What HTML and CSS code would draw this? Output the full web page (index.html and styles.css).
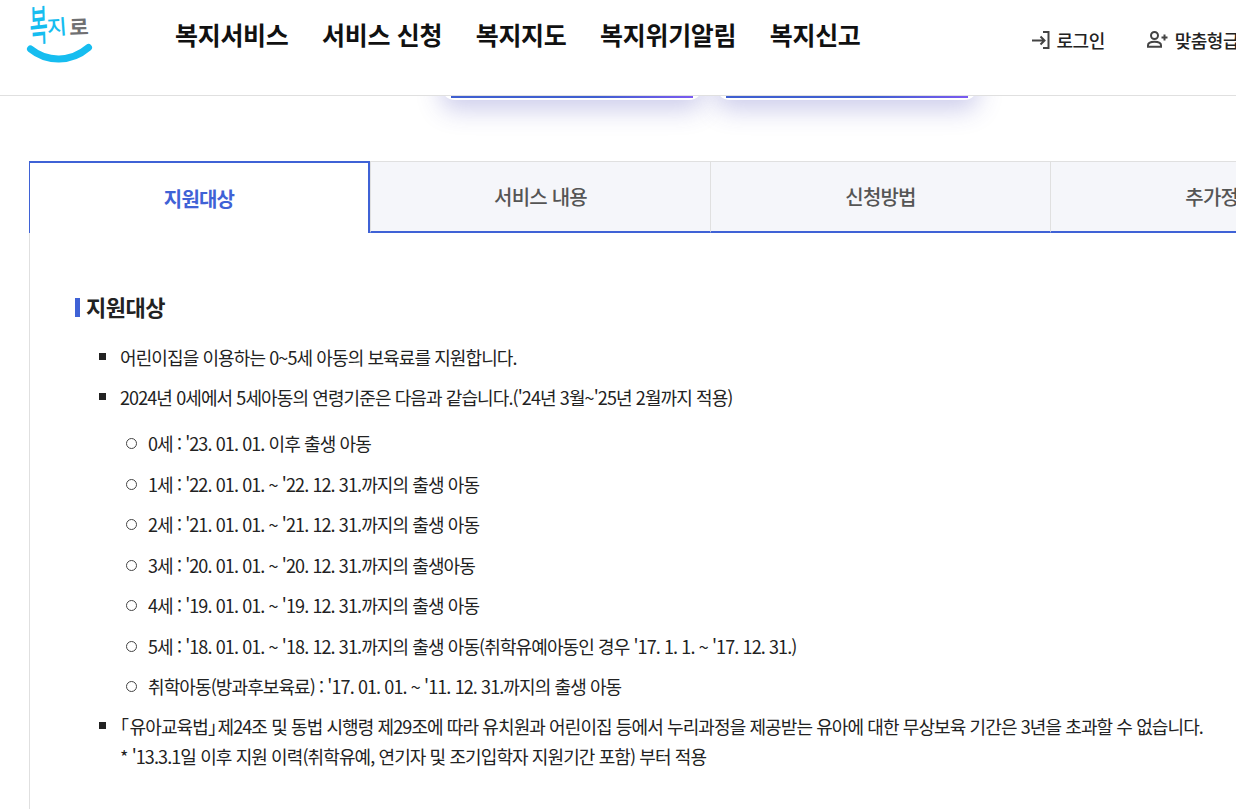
FILE: index.html
```html
<!DOCTYPE html>
<html lang="ko">
<head>
<meta charset="utf-8">
<title>복지로</title>
<link rel="stylesheet" href="styles.css">
</head>
<body>
<header class="site-header">
  <a class="logo" href="#">
    <svg class="logo-svg" width="70" height="66" viewBox="0 0 70 66">
      <text class="logo-t logo-blue" transform="translate(5 42) scale(.82 1.780) rotate(-3)">복</text>
      <text class="logo-t logo-blue" transform="translate(22.500 35) scale(.9 .85) rotate(-4)">지</text>
      <text class="logo-t logo-gray" transform="translate(44.500 35) scale(.88 .85) rotate(-2)">로</text>
      <path d="M5.500 49C22 62.500 46 62.500 63.500 47.500" fill="none" stroke="#16bdf0" stroke-width="7" stroke-linecap="round"/>
    </svg>
  </a>
  <nav class="gnb">
    <a href="#">복지서비스</a>
    <a href="#">서비스 신청</a>
    <a href="#">복지지도</a>
    <a href="#">복지위기알림</a>
    <a href="#">복지신고</a>
  </nav>
  <div class="util">
    <a href="#" class="util-link">
      <svg width="18" height="18" viewBox="0 0 18 18" fill="none" stroke="#444" stroke-width="2"><path d="M0 9.500H12.500M8.500 5.500l4 4-4 4"/><path d="M11 1h5.500v16H11"/></svg>
      로그인
    </a>
    <a href="#" class="util-link">
      <svg width="21" height="17" viewBox="0 0 21 17" fill="none" stroke="#444" stroke-width="2"><circle cx="7.500" cy="4.500" r="3.500"/><path d="M1 15.800v-1.500c0-2.500 3-3.500 6.500-3.500s6.500 1 6.500 3.500v1.500z"/><path d="M14.500 6.500h6M17.500 3.500v6"/></svg>
      맞춤형급여안내
    </a>
  </div>
</header>

<div class="peek">
  <div class="peek-card"></div>
  <div class="peek-card"></div>
</div>

<main class="content">
  <ul class="tabs">
    <li class="tab active">지원대상</li>
    <li class="tab">서비스 내용</li>
    <li class="tab">신청방법</li>
    <li class="tab">추가정보</li>
  </ul>
  <section class="panel">
    <h3 class="panel-title">지원대상</h3>
    <ul class="list">
      <li>어린이집을 이용하는 0~5세 아동의 보육료를 지원합니다.</li>
      <li>2024년 0세에서 5세아동의 연령기준은 다음과 같습니다.('24년 3월~'25년 2월까지 적용)
        <ul class="sublist">
          <li>0세 : '23. 01. 01. 이후 출생 아동</li>
          <li>1세 : '22. 01. 01. ~ '22. 12. 31.까지의 출생 아동</li>
          <li>2세 : '21. 01. 01. ~ '21. 12. 31.까지의 출생 아동</li>
          <li>3세 : '20. 01. 01. ~ '20. 12. 31.까지의 출생아동</li>
          <li>4세 : '19. 01. 01. ~ '19. 12. 31.까지의 출생 아동</li>
          <li>5세 : '18. 01. 01. ~ '18. 12. 31.까지의 출생 아동(취학유예아동인 경우 '17. 1. 1. ~ '17. 12. 31.)</li>
          <li>취학아동(방과후보육료) : '17. 01. 01. ~ '11. 12. 31.까지의 출생 아동</li>
        </ul>
      </li>
      <li><span class="halt">「</span>유아교육법<span class="halt">」</span>제24조 및 동법 시행령 제29조에 따라 유치원과 어린이집 등에서 누리과정을 제공받는 유아에 대한 무상보육 기간은 3년을 초과할 수 없습니다.<br>* '13.3.1일 이후 지원 이력(취학유예, 연기자 및 조기입학자 지원기간 포함) 부터 적용</li>
    </ul>
  </section>
</main>
</body>
</html>
```
FILE: styles.css
```css
* { box-sizing: border-box; }
html, body { margin: 0; padding: 0; overflow: hidden; height: 809px; background: #fff; }
body {
  width: 1236px;
  font-family: "Noto Sans CJK KR", "Noto Sans", sans-serif;
  color: #222;
}
a { color: inherit; text-decoration: none; }
ul { list-style: none; margin: 0; padding: 0; }

.site-header {
  position: relative;
  z-index: 2;
  display: flex;
  height: 96px;
  background: #fff;
  border-bottom: 1px solid #e0e0e0;
  white-space: nowrap;
}
.logo { display: block; width: 70px; height: 66px; margin-left: 25px; flex: none; }
.logo-svg { overflow: visible; }
.logo-t { font-size: 24px; font-weight: 500; }
.logo-blue { fill: #16bdf0; }
.logo-gray { fill: #6f7072; font-weight: 700; }

.gnb {
  display: flex;
  gap: 33.500px;
  margin-left: 80px;
  height: 68px;
  align-items: center;
  flex: none;
  font-size: 25px;
  font-weight: 700;
  letter-spacing: -0.3px;
  color: #111;
}
.util {
  display: flex;
  gap: 42px;
  margin-left: 171px;
  height: 79px;
  align-items: center;
  flex: none;
  font-size: 18px;
  font-weight: 500;
  letter-spacing: -0.5px;
  color: #222;
}
.util-link { display: flex; align-items: center; gap: 7px; }

.peek {
  display: flex;
  gap: 13px;
  margin: 0 0 0 441px;
  height: 4px;
}
.peek-card {
  position: relative;
  width: 262px;
  height: 60px;
  margin-top: -56px;
  flex: none;
  background: #fff;
  border-radius: 0 0 14px 14px;
  box-shadow: 0 10px 24px rgba(60, 60, 180, 0.25);
}
.peek-card::after {
  content: "";
  position: absolute;
  left: 10px;
  right: 10px;
  bottom: 2px;
  height: 2px;
  background: linear-gradient(90deg, #3f5fd0, #3f5fd0 60%, #7a5af0);
}

.content { margin: 61px 0 0 29px; width: 1362px; }
.tabs { display: flex; height: 72px; }
.tab {
  width: 340px;
  flex: none;
  display: flex;
  align-items: center;
  justify-content: center;
  background: #f5f6fa;
  border-top: 1px solid #e0e0e0;
  border-left: 1px solid #e0e0e0;
  border-bottom: 2px solid #3f62d6;
  font-size: 20px;
  font-weight: 500;
  letter-spacing: -0.8px;
  color: #555;
}
.tab.active {
  width: 341px;
  background: #fff;
  color: #3f62d6;
  font-weight: 700;
  border: 2px solid #3f62d6;
  border-bottom: 0;
  border-left-width: 1px;
}
.panel {
  border-left: 1px solid #e0e0e0;
  height: 576px;
  padding: 57px 0 0 45px;
}
.panel-title {
  margin: 0 0 20px;
  padding-left: 11px;
  position: relative;
  font-size: 22px;
  line-height: 32px;
  font-weight: 700;
  letter-spacing: -0.5px;
  color: #222;
}
.panel-title::before {
  content: "";
  position: absolute;
  left: 0;
  top: 8px;
  width: 5px;
  height: 19px;
  background: #3f62d6;
}
.list { width: 1130px; font-size: 18px; line-height: 30px; letter-spacing: -0.9px; color: #222; }
.list > li { position: relative; padding-left: 45px; margin-bottom: 10px; }
.list > li::before {
  content: "";
  position: absolute;
  left: 24px;
  top: 11px;
  width: 7px;
  height: 7px;
  background: #222;
}
.halt { font-feature-settings: "halt"; letter-spacing: 0.6px; }
.sublist { margin-top: 16px; }
.sublist li { position: relative; padding-left: 28px; margin-bottom: 10.500px; }
.sublist li::before {
  content: "";
  position: absolute;
  left: 6px;
  top: 10px;
  width: 9px;
  height: 9px;
  border: 1.500px solid #444;
  border-radius: 50%;
}
.sublist li:last-child { margin-bottom: 0; }
```
